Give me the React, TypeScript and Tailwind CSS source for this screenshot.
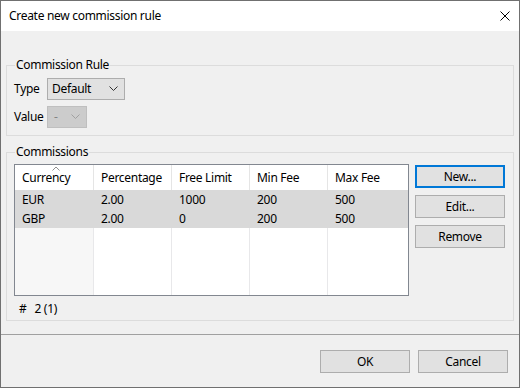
import React from 'react';

const font = { fontFamily: '"Noto Sans", "Open Sans", sans-serif' };

const columns = ['Currency', 'Percentage', 'Free Limit', 'Min Fee', 'Max Fee'];
const rows = [
  ['EUR', '2.00', '1000', '200', '500'],
  ['GBP', '2.00', '0', '200', '500'],
];
const widths = ['w-[79px]', 'w-[78px]', 'w-[78px]', 'w-[78px]', 'w-[80px]'];

const Chevron = ({ color }: { color: string }) => (
  <svg width="9" height="6" viewBox="0 0 9 6">
    <polyline points="0.5,0.5 4.5,4.5 8.5,0.5" fill="none" stroke={color} strokeWidth="1" />
  </svg>
);

const Button = ({ label, focused }: { label: string; focused?: boolean }) => (
  <button
    className={
      focused
        ? 'w-[90px] h-[23px] bg-[#e1e1e1] border-2 border-[#0078d7] text-[12px] text-black'
        : 'w-[90px] h-[23px] bg-[#e1e1e1] border border-[#adadad] text-[12px] text-black'
    }
  >
    {label}
  </button>
);

const CommissionList = () => (
  <div className="w-[395px] h-[132px] border border-[#828790] bg-white flex flex-col">
    <div className="flex h-[25px] shrink-0">
      {columns.map((c, i) => (
        <div key={c} className={`${widths[i]} relative flex items-center pl-[7px] border-r border-[#e5e5e5] last:border-r-0`}>
          {i === 0 && (
            <svg className="absolute left-[37px] top-[1px]" width="8" height="5" viewBox="0 0 8 5">
              <polyline points="0.5,4.5 4,1 7.5,4.5" fill="none" stroke="#909090" strokeWidth="1" />
            </svg>
          )}
          {c}
        </div>
      ))}
    </div>
    {rows.map((r) => (
      <div key={r[0]} className="flex h-[19px] bg-[#d9d9d9] shrink-0">
        {r.map((v, i) => (
          <div key={i} className={`${widths[i]} flex items-center pl-[7px]`}>
            {v}
          </div>
        ))}
      </div>
    ))}
    <div className="flex flex-1">
      {widths.map((w, i) => (
        <div key={i} className={`${w} border-r border-[#e8e8ea] last:border-r-0 ${i === 0 ? 'bg-[#f7f7f7]' : ''}`} />
      ))}
    </div>
  </div>
);

export default function App() {
  return (
    <div className="w-[520px] h-[388px] bg-[#f0f0f0] border border-[#707070] flex flex-col text-[12px] text-black leading-[16px] tracking-[-0.3px]" style={font}>
      <div className="h-[30px] bg-white flex items-center justify-between pl-[8px] pr-[9px] shrink-0">
        <span>Create new commission rule</span>
        <svg width="10" height="10" viewBox="0 0 10 10">
          <path d="M0.5,0.5 L9.5,9.5 M9.5,0.5 L0.5,9.5" stroke="#000" strokeWidth="1" />
        </svg>
      </div>

      <div className="flex flex-col px-[5px] pt-[26px] flex-1">
        <fieldset className="border border-[#dcdcdc] h-[79px] pl-[7px]">
          <legend className="ml-[1px] px-[1px]">Commission Rule</legend>
          <div className="flex flex-col gap-[6px] mt-[5px]">
            <div className="flex items-center gap-[8px]">
              <span className="w-[25px]">Type</span>
              <div className="w-[78px] h-[22px] bg-[#e1e1e1] border border-[#adadad] flex items-center justify-between pl-[4px] pr-[6px]">
                <span>Default</span>
                <Chevron color="#333" />
              </div>
            </div>
            <div className="flex items-center gap-[8px]">
              <span className="w-[25px]">Value</span>
              <div className="w-[40px] h-[22px] bg-[#cccccc] border border-[#bfbfbf] flex items-center justify-between pl-[6px] pr-[6px] text-[#838383]">
                <span>-</span>
                <Chevron color="#a0a0a0" />
              </div>
            </div>
          </div>
        </fieldset>

        <fieldset className="border border-[#dcdcdc] h-[177px] mt-[8px] pl-[7px]">
          <legend className="ml-[1px] px-[1px]">Commissions</legend>
          <div className="flex gap-[6px] mt-[4px]">
            <CommissionList />
            <div className="flex flex-col gap-[7px] mt-[1px]">
              <Button label="New..." focused />
              <Button label="Edit..." />
              <Button label="Remove" />
            </div>
          </div>
          <div className="flex gap-[8px] pl-[5px] mt-[5px]">
            <span>#</span>
            <span>2 (1)</span>
          </div>
        </fieldset>
      </div>

      <div className="h-[53px] border-t border-[#a0a0a0] flex justify-end items-start gap-[8px] pt-[15px] pr-[11px] shrink-0">
        <Button label="OK" />
        <Button label="Cancel" />
      </div>
    </div>
  );
}
